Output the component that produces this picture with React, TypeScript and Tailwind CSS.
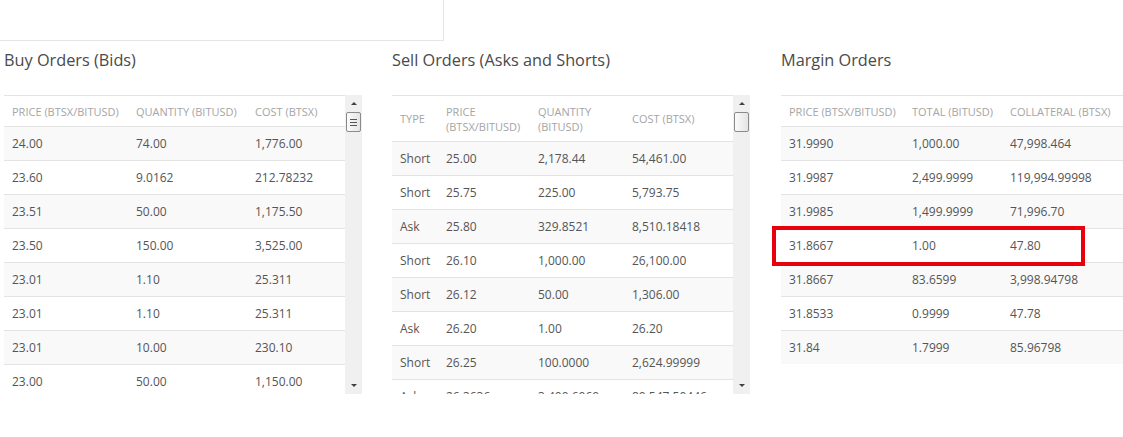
import React from 'react';

type Col = { label: string; width: string };

const buyCols: Col[] = [
    { label: 'Price (BTSX/BITUSD)', width: 'w-[124px]' },
    { label: 'Quantity (BITUSD)', width: 'w-[119px]' },
    { label: 'Cost (BTSX)', width: 'flex-1' },
];

const sellCols: Col[] = [
    { label: 'Type', width: 'w-[46px]' },
    { label: 'Price (BTSX/BITUSD)', width: 'w-[92px]' },
    { label: 'Quantity (BITUSD)', width: 'w-[94px]' },
    { label: 'Cost (BTSX)', width: 'flex-1' },
];

const marginCols: Col[] = [
    { label: 'Price (BTSX/BITUSD)', width: 'w-[123px]' },
    { label: 'Total (BITUSD)', width: 'w-[98px]' },
    { label: 'Collateral (BTSX)', width: 'flex-1' },
];

const buyRows = [
    ['24.00', '74.00', '1,776.00'],
    ['23.60', '9.0162', '212.78232'],
    ['23.51', '50.00', '1,175.50'],
    ['23.50', '150.00', '3,525.00'],
    ['23.01', '1.10', '25.311'],
    ['23.01', '1.10', '25.311'],
    ['23.01', '10.00', '230.10'],
    ['23.00', '50.00', '1,150.00'],
];

const sellRows = [
    ['Short', '25.00', '2,178.44', '54,461.00'],
    ['Short', '25.75', '225.00', '5,793.75'],
    ['Ask', '25.80', '329.8521', '8,510.18418'],
    ['Short', '26.10', '1,000.00', '26,100.00'],
    ['Short', '26.12', '50.00', '1,306.00'],
    ['Ask', '26.20', '1.00', '26.20'],
    ['Short', '26.25', '100.0000', '2,624.99999'],
    ['Ask', '26.3636', '3,400.6969', '89,547.50446'],
];

const marginRows = [
    ['31.9990', '1,000.00', '47,998.464'],
    ['31.9987', '2,499.9999', '119,994.99998'],
    ['31.9985', '1,499.9999', '71,996.70'],
    ['31.8667', '1.00', '47.80'],
    ['31.8667', '83.6599', '3,998.94798'],
    ['31.8533', '0.9999', '47.78'],
    ['31.84', '1.7999', '85.96798'],
];

const Scrollbar = ({ grip }: { grip: boolean }) => (
    <div className="flex h-full w-[17px] shrink-0 flex-col items-center bg-[#f0f0f0]">
        <div className="flex h-[17px] w-full items-center justify-center">
            <div className="h-0 w-0 border-x-[3px] border-b-[3px] border-x-transparent border-b-[#404040]" />
        </div>
        <div className="flex h-[20px] w-[15px] flex-col items-center justify-center gap-[2px] rounded-[2px] border border-[#8a8a8a] bg-gradient-to-r from-[#fbfbfb] to-[#e4e4e4]">
            {grip && (
                <>
                    <span className="h-px w-[7px] bg-[#555]" />
                    <span className="h-px w-[7px] bg-[#555]" />
                    <span className="h-px w-[7px] bg-[#555]" />
                </>
            )}
        </div>
        <div className="flex-1" />
        <div className="flex h-[17px] w-full items-center justify-center">
            <div className="h-0 w-0 border-x-[3px] border-t-[3px] border-x-transparent border-t-[#404040]" />
        </div>
    </div>
);

const OrderTable = ({
    cols,
    rows,
    tall,
    marked,
}: {
    cols: Col[];
    rows: string[][];
    tall?: boolean;
    marked?: number;
}) => (
    <div className="w-full">
        <div
            className={`flex border-t border-[#e3e3e3] text-[11px] leading-[15px] text-[#a5a5a5] uppercase ${tall ? 'h-[46px]' : 'h-[31px]'}`}
        >
            {cols.map((c) => (
                <div key={c.label} className={`${c.width} flex items-center px-2`}>
                    {c.label}
                </div>
            ))}
        </div>
        {rows.map((r, i) => (
            <div
                key={i}
                className={`relative flex h-[34px] items-center border-t border-[#e3e3e3] text-[12px] text-[#555] ${i % 2 === 0 ? 'bg-[#f9f9f9]' : 'bg-white'}`}
            >
                {r.map((v, j) => (
                    <div key={j} className={`${cols[j].width} px-2`}>
                        {v}
                    </div>
                ))}
                {marked === i && (
                    <span className="absolute -top-[3px] -left-[9px] z-10 h-[40px] w-[313px] border-4 border-[#e8000b]" />
                )}
            </div>
        ))}
    </div>
);

const Heading = ({ children }: { children: React.ReactNode }) => (
    <h2 className="mt-[7px] mb-[23px] h-[24px] text-[16.3px] leading-[24px] text-[#4a4a4a]">
        {children}
    </h2>
);

const App = () => {
    return (
        <div className="h-[437px] w-[1123px] overflow-hidden bg-white font-['Open_Sans',sans-serif]">
            <div className="h-[41px] w-[444px] border-r border-b border-[#e6e6e6]" />
            <div className="flex gap-[30px] pl-[4px]">
                <div className="w-[358px] shrink-0">
                    <Heading>Buy Orders (Bids)</Heading>
                    <div className="flex h-[299px]">
                        <div className="h-full w-[341px] overflow-hidden">
                            <OrderTable cols={buyCols} rows={buyRows} />
                        </div>
                        <Scrollbar grip />
                    </div>
                </div>
                <div className="w-[358px] shrink-0">
                    <Heading>Sell Orders (Asks and Shorts)</Heading>
                    <div className="flex h-[299px]">
                        <div className="h-full w-[341px] overflow-hidden">
                            <OrderTable cols={sellCols} rows={sellRows} tall />
                        </div>
                        <Scrollbar grip={false} />
                    </div>
                </div>
                <div className="ml-px w-[358px] shrink-0">
                    <Heading>Margin Orders</Heading>
                    <div className="w-[342px]">
                        <OrderTable cols={marginCols} rows={marginRows} marked={3} />
                    </div>
                </div>
            </div>
        </div>
    );
};

export default App;
